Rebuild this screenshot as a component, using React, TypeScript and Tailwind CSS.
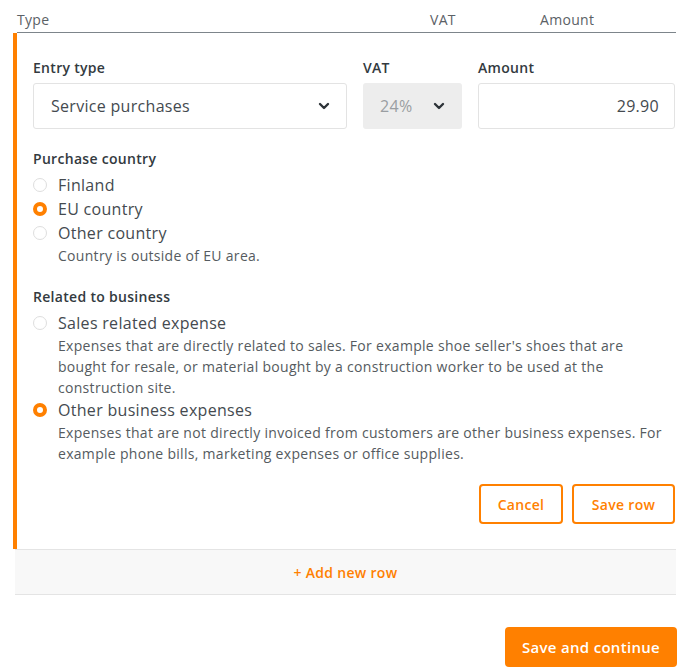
import React from "react";

function Chevron() {
  return (
    <svg width="12" height="8" viewBox="0 0 12 8" className="shrink-0">
      <polyline points="2,2 6,6 10,2" fill="none" stroke="#2d3338" strokeWidth="2.4" strokeLinecap="round" strokeLinejoin="round" />
    </svg>
  );
}

function Radio({ checked }: { checked?: boolean }) {
  return checked ? (
    <span className="w-[14px] h-[14px] rounded-full border-[4px] border-[#ff8000] bg-white shrink-0" />
  ) : (
    <span className="w-[14px] h-[14px] rounded-full border border-[#dedede] bg-white shrink-0" />
  );
}

function RadioRow({ label, checked }: { label: string; checked?: boolean }) {
  return (
    <div className="flex items-center h-[24px] gap-[11px]">
      <Radio checked={checked} />
      <span className="text-[16px] text-[#444a4f]">{label}</span>
    </div>
  );
}

export default function App() {
  return (
    <div className="w-[687px] h-[672px] bg-white font-['Open_Sans',sans-serif] tracking-[0.3px] text-[#333]">
      <div className="pt-[10px]">
        <div className="ml-[17px] mr-[11px] flex h-[23px] border-b border-[#7d858b] text-[14px] leading-[20px] text-[#5b6166]">
          <span className="w-[413px]">Type</span>
          <span className="w-[110px]">VAT</span>
          <span>Amount</span>
        </div>
        <div className="ml-[13px] mr-[11px] border-l-4 border-[#ff8000] pl-[16px] pr-[1px] pt-[25px] pb-[25px]">
          <div className="flex gap-[16px]">
            <div className="w-[314px]">
              <div className="text-[14px] font-semibold h-[20px] leading-[20px] text-[#333a40]">Entry type</div>
              <div className="mt-[5px] h-[46px] border border-[#e3e3e3] rounded-[3px] flex items-center justify-between pl-[17px] pr-[16px]">
                <span className="text-[16px] text-[#444a4f]">Service purchases</span>
                <Chevron />
              </div>
            </div>
            <div className="w-[99px]">
              <div className="text-[14px] font-semibold h-[20px] leading-[20px] text-[#333a40]">VAT</div>
              <div className="mt-[5px] h-[46px] bg-[#ededed] rounded-[3px] flex items-center justify-between pl-[17px] pr-[17px]">
                <span className="text-[16px] text-[#9a9ea2]">24%</span>
                <Chevron />
              </div>
            </div>
            <div className="flex-1">
              <div className="text-[14px] font-semibold h-[20px] leading-[20px] text-[#333a40]">Amount</div>
              <div className="mt-[5px] h-[46px] border border-[#e3e3e3] rounded-[3px] flex items-center justify-end pr-[15px]">
                <span className="text-[16px] text-[#444a4f]">29.90</span>
              </div>
            </div>
          </div>

          <div className="mt-[20px] text-[14px] font-semibold h-[20px] leading-[20px] text-[#333a40]">Purchase country</div>
          <div className="mt-[4px]">
            <RadioRow label="Finland" />
            <RadioRow label="EU country" checked />
            <RadioRow label="Other country" />
            <div className="pl-[25px] text-[14px] leading-[21px] text-[#555b60]">Country is outside of EU area.</div>
          </div>

          <div className="mt-[21px] text-[14px] font-semibold h-[20px] leading-[20px] text-[#333a40]">Related to business</div>
          <div className="mt-[4px]">
            <RadioRow label="Sales related expense" />
            <div className="pl-[25px] text-[14px] leading-[21px] text-[#555b60]">
              Expenses that are directly related to sales. For example shoe seller's shoes that are bought for resale, or material bought by a construction worker to be used at the construction site.
            </div>
            <RadioRow label="Other business expenses" checked />
            <div className="pl-[25px] text-[14px] leading-[21px] text-[#555b60]">
              Expenses that are not directly invoiced from customers are other business expenses. For example phone bills, marketing expenses or office supplies.
            </div>
          </div>

          <div className="mt-[20px] flex justify-end gap-[9px]">
            <button className="w-[84px] h-[40px] border-2 border-[#ff8000] rounded-[4px] text-[14px] font-semibold text-[#ff8000]">Cancel</button>
            <button className="w-[103px] h-[40px] border-2 border-[#ff8000] rounded-[4px] text-[14px] font-semibold text-[#ff8000]">Save row</button>
          </div>
        </div>
        <div className="ml-[15px] mr-[11px] h-[46px] bg-[#f8f8f8] border-y border-[#e4e4e4] flex items-center justify-center text-[14px] font-semibold text-[#ff8000]">
          + Add new row
        </div>
        <div className="mt-[32px] mr-[10px] flex justify-end">
          <button className="w-[172px] h-[40px] bg-[#ff8000] rounded-[4px] text-white text-[15px] font-semibold">Save and continue</button>
        </div>
      </div>
    </div>
  );
}
